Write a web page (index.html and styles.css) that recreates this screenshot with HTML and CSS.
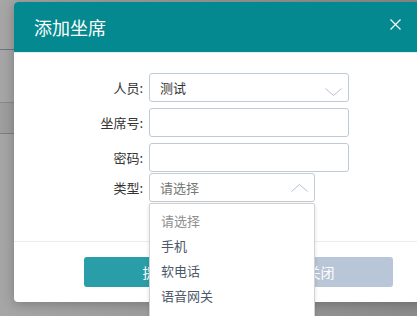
FILE: index.html
```html
<!DOCTYPE html>
<html lang="zh">
<head>
<meta charset="utf-8">
<title>添加坐席</title>
<link rel="stylesheet" href="styles.css">
</head>
<body>
<div class="backdrop">
  <div class="modal">
    <div class="modal-header">
      <span class="modal-title">添加坐席</span>
      <svg class="close" width="11" height="11" viewBox="0 0 11 11"><path d="M0.5 0.5 L10.5 10.5 M10.5 0.5 L0.5 10.5" stroke="#fff" stroke-width="1.2" fill="none"/></svg>
    </div>
    <div class="modal-body">
      <div class="row">
        <label class="label">人员:</label>
        <div class="field select">
          <span class="value">测试</span>
          <svg class="chev" width="17" height="8" viewBox="0 0 17 8"><polyline points="0.5,0.5 8.5,7.5 16.5,0.5" stroke="#b3bfd0" stroke-width="1" fill="none"/></svg>
        </div>
      </div>
      <div class="row">
        <label class="label">坐席号:</label>
        <div class="field"></div>
      </div>
      <div class="row">
        <label class="label">密码:</label>
        <div class="field"></div>
      </div>
      <div class="row row-type">
        <label class="label">类型:</label>
        <div class="field select short">
          <span class="value placeholder">请选择</span>
          <svg class="chev" width="17" height="8" viewBox="0 0 17 8"><polyline points="0.5,7.5 8.5,0.5 16.5,7.5" stroke="#b3bfd0" stroke-width="1" fill="none"/></svg>
          <ul class="dropdown">
            <li class="placeholder">请选择</li>
            <li>手机</li>
            <li>软电话</li>
            <li>语音网关</li>
          </ul>
        </div>
      </div>
    </div>
    <div class="modal-footer">
      <button class="btn btn-primary">提交</button>
      <button class="btn btn-muted">关闭</button>
    </div>
  </div>
</div>
</body>
</html>
```

FILE: styles.css
```css
* { box-sizing: border-box; }
html, body {
  margin: 0;
  padding: 0;
  width: 417px;
  height: 316px;
  overflow: hidden;
}
body {
  font-family: "Noto Sans CJK SC", "Noto Sans", sans-serif;
  background-color: #9c9c9c;
  background-image:
    linear-gradient(to bottom,
      transparent 0, transparent 49px,
      #6e7380 49px, #6e7380 50px,
      transparent 50px, transparent 102px,
      #8a8a8a 102px, #8a8a8a 103px,
      rgba(0,0,0,0.05) 103px, rgba(0,0,0,0.05) 133px,
      #7e7e7e 133px, #7e7e7e 134px,
      transparent 134px),
    linear-gradient(to right, #a6a6a6 0, #9a9a9a 200px, #8c8c8c 417px);
}
.backdrop {
  padding: 2px 0 0 14px;
}
.modal {
  width: 420px;
  height: 300px;
  background: #fff;
  border-radius: 4px;
  box-shadow: 0 2px 12px rgba(0,0,0,0.25);
  display: flex;
  flex-direction: column;
}
.modal-header {
  height: 51px;
  flex: none;
  background: #03898f;
  border-radius: 4px 4px 0 0;
  border-bottom: 1px solid #e9eef2;
  display: flex;
  align-items: center;
  padding: 0 0 1px 20px;
  position: relative;
}
.modal-title {
  color: #fff;
  font-size: 18px;
  line-height: 24px;
}
.close {
  position: absolute;
  left: 376px;
  top: 17px;
}
.modal-body {
  flex: none;
  height: 189px;
  padding-top: 20px;
  border-bottom: 1px solid #ebebeb;
}
.row {
  display: flex;
  align-items: center;
  margin-bottom: 6px;
}
.row-type {
  margin-top: -5px;
}
.label {
  width: 129px;
  text-align: right;
  font-size: 13px;
  color: #333;
  margin-right: 6px;
}
.field {
  width: 200px;
  height: 29px;
  border: 1px solid #bfcad9;
  border-radius: 3px;
  position: relative;
  display: flex;
  align-items: center;
  padding-left: 10px;
  background: #fff;
}
.field.short {
  width: 166px;
  border-color: #c6ccd3;
}
.value {
  font-size: 13px;
  color: #333;
}
.value.placeholder {
  color: #777;
}
.chev {
  position: absolute;
  right: 6px;
  top: 14px;
}
.short .chev {
  top: 10px;
}
.dropdown {
  position: absolute;
  left: -1px;
  top: 29px;
  width: 166px;
  height: 130px;
  margin: 0;
  padding: 4px 0 0;
  list-style: none;
  background: #fff;
  border: 1px solid #d2d2d2;
  border-radius: 2px;
  box-shadow: 0 1px 4px rgba(0,0,0,0.12);
  z-index: 5;
}
.dropdown li {
  height: 25px;
  line-height: 25px;
  padding-left: 11px;
  font-size: 13px;
  color: #4c5868;
}
.dropdown li.placeholder {
  color: #8f8f8f;
}
.modal-footer {
  flex: 1;
  display: flex;
  gap: 19px;
  padding: 15px 0 0 70px;
}
.btn {
  width: 145px;
  height: 30px;
  border: 0;
  border-radius: 3px;
  color: #fff;
  font-family: inherit;
  font-size: 14px;
  padding: 0;
}
.btn-primary {
  background: #2a9ea8;
}
.btn-muted {
  background: #b9c6d7;
}
```
